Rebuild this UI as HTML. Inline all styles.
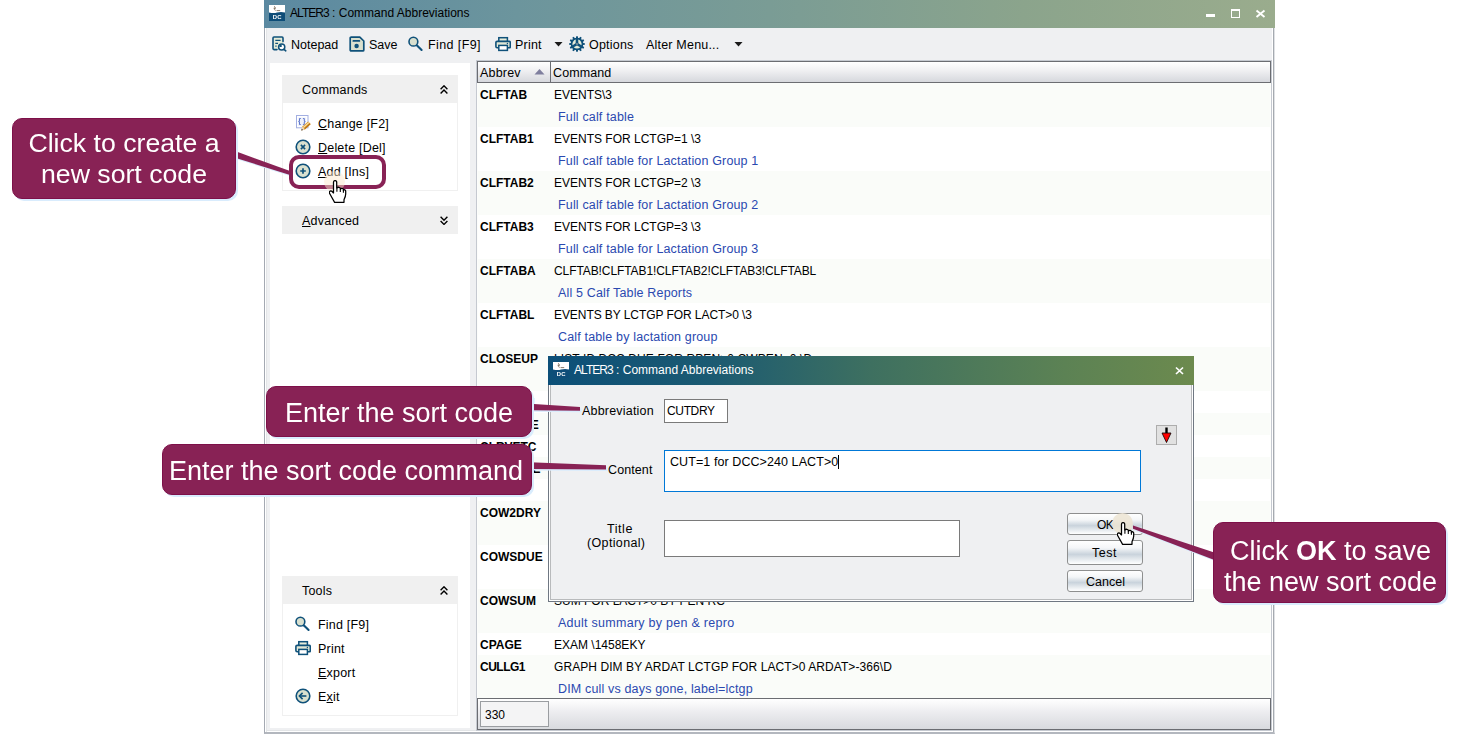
<!DOCTYPE html>
<html><head><meta charset="utf-8"><title>ALTER3 : Command Abbreviations</title>
<style>
*{box-sizing:border-box;margin:0;padding:0}
html,body{width:1463px;height:734px;overflow:hidden;background:#fff}
body{position:relative;font-family:"Liberation Sans",sans-serif;font-size:12px;color:#000}
.a{position:absolute}
.t{position:absolute;white-space:pre;line-height:14px;height:14px;margin-top:1px}
.nt{margin-top:0}
.lc{font-size:12.5px;letter-spacing:.2px}
u{text-decoration:underline;text-underline-offset:1px}
/* main window */
#win{left:264px;top:0;width:1011px;height:734px;background:#eff0f2;border-left:1px solid #a4a9b2;border-right:1px solid #dfe1e4;border-bottom:2px solid #b3b7be;box-shadow:inset 1px 0 0 #fff,inset 2px 0 0 #e3e5e7,inset -1px 0 0 #a5aab0,inset -2px 0 0 #fff,inset 0 -1px 0 #fff,inset 0 -2px 0 #e3e5e7}
#tbar{left:264px;top:0;width:1011px;height:28px;background:linear-gradient(90deg,#5b89a1 0%,#6c959d 25%,#7a9c95 50%,#8ba48c 75%,#9aac8d 100%)}
#lpanel{left:270px;top:63px;width:200px;height:665px;background:#fff}
.ph{background:#f0f0f0;left:282px;width:176px;height:28px}
.pb{left:282px;width:176px;background:#fff;border:1px solid #f0f0f0;border-top:none}
/* list */
#list{left:476px;top:60px;width:796px;height:671px;background:#fcfdfb;border:1px solid #c5c9d0}
#lhead{left:477px;top:61px;width:794px;height:22px;border:1px solid #6b6d72;background:linear-gradient(#ffffff 0%,#f1f1f3 40%,#d6d8dd 100%)}
#lfoot{left:477px;top:698px;width:794px;height:32px;border:1px solid #6b6d72;background:linear-gradient(#ffffff 0%,#ececef 45%,#d8dade 100%)}
.st{left:478px;width:792px;background:#fafcf9}
.sw{left:478px;width:792px;background:#ffffff}
.ab{left:480px;font-weight:bold}
.cm{left:554px}
.ds{left:558px;color:#2a49b0;font-size:12.5px;letter-spacing:.16px}
/* dialog */
#dlg{left:548px;top:356px;width:646px;height:246px;background:#eff0f2;border:1px solid #6f7782;border-top:none;box-shadow:inset 1px 0 0 #fff,inset -1px 0 0 #fff,inset 0 -1px 0 #fff,inset 2px 0 0 #b8babc,inset -2px 0 0 #b8babc,inset 0 -2px 0 #b8babc}
#dtb{left:548px;top:356px;width:646px;height:29px;background:linear-gradient(90deg,#0c4f78 0%,#1b5a72 25%,#3e7060 50%,#5c8254 80%,#6c8a4e 100%)}
.inp{background:#fff;border:1px solid #7a7a7a}
.btn{left:1067px;width:76px;border:1px solid #8e8f8f;border-radius:3px;background:linear-gradient(#ffffff 0%,#f4f6f8 30%,#c9d3dc 58%,#dfe5ea 75%,#ffffff 100%);text-align:center}
/* callouts */
.co{background:#882255;border:1px solid #7d1049;border-radius:10px;color:#fff;text-align:center;font-size:26.67px;line-height:31px;box-shadow:2px 2px 0 #d9ecfd;white-space:pre}
</style></head><body>

<!-- MAIN WINDOW -->
<div class="a" id="win"></div>
<div class="a" id="tbar"></div>
<div class="t nt" style="left:290px;top:6px;font-size:12px;letter-spacing:0"><span style="letter-spacing:-.95px">ALTER3</span> : Command Abbreviations</div>

<!-- left panel -->
<div class="a" id="lpanel"></div>
<div class="a ph" style="top:75px"></div>
<div class="a pb" style="top:103px;height:88px"></div>
<div class="t lc" style="left:302px;top:82px">Commands</div>
<div class="t lc" style="left:318px;top:116px"><u>C</u>hange [F2]</div>
<div class="t lc" style="left:318px;top:140px"><u>D</u>elete [Del]</div>
<div class="t lc" style="left:318px;top:164px"><u>A</u>dd [Ins]</div>
<div class="a ph" style="top:206px"></div>
<div class="t lc" style="left:302px;top:213px"><u>A</u>dvanced</div>
<div class="a ph" style="top:576px"></div>
<div class="a pb" style="top:604px;height:112px"></div>
<div class="t lc" style="left:302px;top:583px">Tools</div>
<div class="t lc" style="left:318px;top:617px">Find [F9]</div>
<div class="t lc" style="left:318px;top:641px">Print</div>
<div class="t lc" style="left:318px;top:665px"><u>E</u>xport</div>
<div class="t lc" style="left:318px;top:689px">E<u>x</u>it</div>

<!-- list -->
<div class="a" id="list"></div>

<!-- list rows -->
<div class="a st" style="top:83px;height:44px"></div>
<div class="t ab" style="top:87px">CLFTAB</div><div class="t cm" style="top:87px">EVENTS\3</div>
<div class="t ds" style="top:109px">Full calf table</div>
<div class="a sw" style="top:127px;height:44px"></div>
<div class="t ab" style="top:131px">CLFTAB1</div><div class="t cm" style="top:131px">EVENTS FOR LCTGP=1 \3</div>
<div class="t ds" style="top:153px">Full calf table for Lactation Group 1</div>
<div class="a st" style="top:171px;height:44px"></div>
<div class="t ab" style="top:175px">CLFTAB2</div><div class="t cm" style="top:175px">EVENTS FOR LCTGP=2 \3</div>
<div class="t ds" style="top:197px">Full calf table for Lactation Group 2</div>
<div class="a sw" style="top:215px;height:44px"></div>
<div class="t ab" style="top:219px">CLFTAB3</div><div class="t cm" style="top:219px">EVENTS FOR LCTGP=3 \3</div>
<div class="t ds" style="top:241px">Full calf table for Lactation Group 3</div>
<div class="a st" style="top:259px;height:44px"></div>
<div class="t ab" style="top:263px">CLFTABA</div><div class="t cm" style="top:263px;letter-spacing:-.09px">CLFTAB!CLFTAB1!CLFTAB2!CLFTAB3!CLFTABL</div>
<div class="t ds" style="top:285px">All 5 Calf Table Reports</div>
<div class="a sw" style="top:303px;height:44px"></div>
<div class="t ab" style="top:307px">CLFTABL</div><div class="t cm" style="top:307px;letter-spacing:-.07px">EVENTS BY LCTGP FOR LACT&gt;0 \3</div>
<div class="t ds" style="top:329px">Calf table by lactation group</div>
<div class="a st" style="top:347px;height:44px"></div>
<div class="t ab" style="top:351px">CLOSEUP</div><div class="t cm" style="top:351px;letter-spacing:.1px">LIST ID DCC DUE FOR RPEN&gt;0 CWPEN=0 \D</div>
<div class="t ds" style="top:373px">Close up cows</div>
<div class="a sw" style="top:391px;height:22px"></div>
<div class="t ab" style="top:395px">CLOSEP1</div><div class="t cm" style="top:395px">LIST ID DCC DUE FOR DCC&gt;250 \D</div>
<div class="a st" style="top:413px;height:22px"></div>
<div class="t ab" style="top:417px">CLOSURE</div><div class="t cm" style="top:417px">LIST ID DCC DUE FOR DCC&gt;255 \D</div>
<div class="a sw" style="top:435px;height:22px"></div>
<div class="t ab" style="top:439px">CLRVETC</div><div class="t cm" style="top:439px">ENTER VETC=0 FOR VETC&gt;0</div>
<div class="a st" style="top:457px;height:22px"></div>
<div class="t ab" style="top:461px">COMPARE</div><div class="t cm" style="top:461px">GRAPH MILK BY DIM LCTGP</div>
<div class="a sw" style="top:479px;height:22px"></div>
<div class="t ab" style="top:483px">COW</div><div class="t cm" style="top:483px">LIST ID PEN LACT</div>
<div class="a st" style="top:501px;height:44px"></div>
<div class="t ab" style="top:505px">COW2DRY</div><div class="t cm" style="top:505px">LIST ID PEN DCC DUE FOR DCC&gt;210 LACT&gt;0</div>
<div class="t ds" style="top:527px">Cows to dry off</div>
<div class="a sw" style="top:545px;height:44px"></div>
<div class="t ab" style="top:549px">COWSDUE</div><div class="t cm" style="top:549px">LIST ID PEN DUE FOR RC=5 BY DUE</div>
<div class="t ds" style="top:571px">Cows due to calve</div>
<div class="a st" style="top:589px;height:44px"></div>
<div class="t ab" style="top:593px">COWSUM</div><div class="t cm" style="top:593px">SUM FOR LACT&gt;0 BY PEN RC</div>
<div class="t ds" style="top:615px;letter-spacing:.27px">Adult summary by pen &amp; repro</div>
<div class="a sw" style="top:633px;height:22px"></div>
<div class="t ab" style="top:637px">CPAGE</div><div class="t cm" style="top:637px">EXAM \1458EKY</div>
<div class="a st" style="top:655px;height:44px"></div>
<div class="t ab" style="top:659px;letter-spacing:-.5px">CULLG1</div><div class="t cm" style="top:659px;letter-spacing:.075px">GRAPH DIM BY ARDAT LCTGP FOR LACT&gt;0 ARDAT&gt;-366\D</div>
<div class="t ds" style="top:681px">DIM cull vs days gone, label=lctgp</div>
<div class="a" id="lhead"></div>
<div class="a" id="lfoot"></div>
<div class="a" style="left:550px;top:62px;width:1px;height:20px;background:#6b6d72"></div>
<div class="t lc" style="left:480px;top:65px">Abbrev</div>
<div class="t lc" style="left:553px;top:65px;letter-spacing:.1px">Command</div>
<svg class="a" style="left:534px;top:68px" width="11" height="7" viewBox="0 0 11 7"><path d="M0.5 6.5 L5.5 1 L10.5 6.5 Z" fill="#7f7f9e"/></svg>
<div class="a inp" style="left:480px;top:701px;width:69px;height:26px;border-color:#9a9da1;background:#f4f4f5"></div>
<div class="t" style="left:485px;top:707px">330</div>

<!-- toolbar -->
<div class="t lc" style="left:291px;top:37px;letter-spacing:0">Notepad</div>
<div class="t lc" style="left:369px;top:37px;letter-spacing:0">Save</div>
<div class="t lc" style="left:428px;top:37px;letter-spacing:.4px">Find [F9]</div>
<div class="t lc" style="left:515px;top:37px">Print</div>
<div class="t lc" style="left:589px;top:37px">Options</div>
<div class="t lc" style="left:646px;top:37px">Alter Menu...</div>
<svg class="a" style="left:554px;top:42px" width="9" height="5" viewBox="0 0 9 5"><path d="M0.5 0 L8.5 0 L4.5 4.5 Z" fill="#1a1a1a"/></svg>
<svg class="a" style="left:734px;top:42px" width="9" height="5" viewBox="0 0 9 5"><path d="M0.5 0 L8.5 0 L4.5 4.5 Z" fill="#1a1a1a"/></svg>

<!-- DIALOG -->
<div class="a" id="dlg"></div>
<div class="a" id="dtb"></div>
<div class="t nt" style="left:574px;top:363px;color:#fff;letter-spacing:0"><span style="letter-spacing:-.95px">ALTER3</span> : Command Abbreviations</div>
<div class="t lc" style="left:582px;top:403px">Abbreviation</div>
<div class="a inp" style="left:664px;top:399px;width:64px;height:24px"></div>
<div class="t" style="left:667px;top:403px;letter-spacing:-.35px">CUTDRY</div>
<div class="t lc" style="left:608px;top:462px;letter-spacing:.1px">Content</div>
<div class="a inp" style="left:664px;top:450px;width:477px;height:42px;border-color:#0078d7"></div>
<div class="t lc" style="left:670px;top:454px;letter-spacing:.08px">CUT=1 for DCC&gt;240 LACT&gt;0</div>
<div class="a" style="left:838px;top:455px;width:1px;height:14px;background:#000"></div>
<div class="t lc" style="left:607px;top:521px;letter-spacing:.55px">Title</div>
<div class="t lc" style="left:587px;top:535px;letter-spacing:.35px">(Optional)</div>
<div class="a inp" style="left:664px;top:520px;width:296px;height:37px"></div>
<div class="a" style="left:1156px;top:425px;width:21px;height:20px;background:#e1e1e1;border:1px solid #adadad"></div>
<svg class="a" style="left:1160px;top:427px" width="13" height="16" viewBox="0 0 13 16"><path d="M6.5 0.5 V8" stroke="#000" stroke-width="2.4"/><path d="M2 6 H11 L6.5 15.5 Z" fill="#f00" stroke="#000" stroke-width="0.8"/></svg>
<div class="a btn" style="top:513px;height:22px"></div>
<div class="a btn" style="top:540px;height:25px"></div>
<div class="a btn" style="top:570px;height:22px"></div>
<div class="t" style="left:1097px;top:517px;font-size:12px;letter-spacing:-.7px">OK</div>
<div class="t lc" style="left:1092px;top:545px;letter-spacing:.55px">Test</div>
<div class="t lc" style="left:1086px;top:574px;letter-spacing:0">Cancel</div>

<!-- ICONS -->
<svg class="a" style="left:269px;top:5px;will-change:transform" width="16" height="16" viewBox="0 0 16 16" ><rect x="0" y="0" width="16" height="16" fill="#0e4d78"/><path d="M0 0 H16 V7.6 C13 6.6 10.5 6.8 8 7.6 C5.5 8.4 3 8.2 0 7.4 Z" fill="#fff"/><path d="M5 1.5 l1 .5 l.3 1.2 l-.8 1 l.9 1.4 M4.6 3.3 l1.6 .2 M7.6 5.6 h3.6" stroke="#6b5a48" stroke-width=".8" fill="none"/><text x="8.2" y="13.9" font-family="Liberation Sans,sans-serif" font-weight="bold" font-size="5.9" fill="#fff" text-anchor="middle" letter-spacing=".2">DC</text></svg>
<svg class="a" style="left:553px;top:362px;will-change:transform" width="16" height="16" viewBox="0 0 16 16" ><rect x="0" y="0" width="16" height="16" fill="#0e4d78"/><path d="M0 0 H16 V7.6 C13 6.6 10.5 6.8 8 7.6 C5.5 8.4 3 8.2 0 7.4 Z" fill="#fff"/><path d="M5 1.5 l1 .5 l.3 1.2 l-.8 1 l.9 1.4 M4.6 3.3 l1.6 .2 M7.6 5.6 h3.6" stroke="#6b5a48" stroke-width=".8" fill="none"/><text x="8.2" y="13.9" font-family="Liberation Sans,sans-serif" font-weight="bold" font-size="5.9" fill="#fff" text-anchor="middle" letter-spacing=".2">DC</text></svg>
<svg class="a" style="left:271px;top:35px" width="16" height="17" viewBox="0 0 16 17" ><path d="M2 2.8 Q2 2 2.8 2 H11.2 Q12 2 12 2.8 V14.5 H2 Z" fill="#e6ecd9"/><path d="M12 6.6 V3 Q12 2 11 2 H3 Q2 2 2 3 V13.6 Q2 14.6 3 14.6 H6" fill="none" stroke="#0f517a" stroke-width="1.6" stroke-linecap="round"/><path d="M4.3 5.4 H9.6 M4.3 8.3 H7 M4.3 11.2 H5.6" stroke="#0f517a" stroke-width="1.3"/><circle cx="10.7" cy="12" r="3.1" fill="#fff" stroke="#0f517a" stroke-width="1.5"/><path d="M10.7 12 V9.6 A2.4 2.4 0 0 0 8.3 12 Z" fill="#0f517a"/><path d="M13 14.3 L14.8 15.8" stroke="#0f517a" stroke-width="1.6" stroke-linecap="round"/></svg>
<svg class="a" style="left:349px;top:36px" width="16" height="16" viewBox="0 0 16 16" ><path d="M2.2 1.1 H10.8 L14.8 5 V13.9 Q14.8 14.9 13.8 14.9 H2.2 Q1.2 14.9 1.2 13.9 V2.1 Q1.2 1.1 2.2 1.1 Z" fill="#d9e0cf" stroke="#0f517a" stroke-width="1.7" stroke-linejoin="round"/><path d="M4.3 4.9 H10.4" stroke="#0f517a" stroke-width="1.7" stroke-linecap="round"/><circle cx="7.6" cy="10" r="2.2" fill="#0f517a"/></svg>
<svg class="a" style="left:408px;top:36px" width="16" height="16" viewBox="0 0 16 16" ><circle cx="5.4" cy="5.65" r="4.4" fill="#d9e0cf" stroke="#0f517a" stroke-width="1.6"/><path d="M9 9.4 L13.6 14" stroke="#0f517a" stroke-width="2.1" stroke-linecap="round"/></svg>
<svg class="a" style="left:495px;top:36px" width="16" height="16" viewBox="0 0 16 16" ><rect x="3.8" y="1.7" width="8.6" height="4" fill="#e6ecd9" stroke="#0f517a" stroke-width="1.5"/><rect x="0.9" y="5.4" width="14.4" height="6.4" rx="1.2" fill="#e2e8d6" stroke="#0f517a" stroke-width="1.6"/><rect x="3.8" y="9.4" width="8.6" height="5" fill="#fff" stroke="#0f517a" stroke-width="1.5"/><circle cx="12.4" cy="7.4" r=".7" fill="#0f517a"/></svg>
<svg class="a" style="left:569px;top:36px" width="16" height="16" viewBox="0 0 16 16" ><polygon points="6.90,1.90 7.17,0.14 8.83,0.14 9.10,1.90 10.10,2.17 11.21,0.78 12.64,1.61 12.00,3.26 12.74,4.00 14.39,3.36 15.22,4.79 13.83,5.90 14.10,6.90 15.86,7.17 15.86,8.83 14.10,9.10 13.83,10.10 15.22,11.21 14.39,12.64 12.74,12.00 12.00,12.74 12.64,14.39 11.21,15.22 10.10,13.83 9.10,14.10 8.83,15.86 7.17,15.86 6.90,14.10 5.90,13.83 4.79,15.22 3.36,14.39 4.00,12.74 3.26,12.00 1.61,12.64 0.78,11.21 2.17,10.10 1.90,9.10 0.14,8.83 0.14,7.17 1.90,6.90 2.17,5.90 0.78,4.79 1.61,3.36 3.26,4.00 4.00,3.26 3.36,1.61 4.79,0.78 5.90,2.17" fill="#0f517a"/><circle cx="8" cy="8" r="6.2" fill="#0f517a"/><path d="M8.00 9.60 L11.24 11.27 A4.6 4.6 0 0 1 4.76 11.27 Z" fill="#e6ecd9"/><path d="M6.61 7.20 L3.55 9.17 A4.6 4.6 0 0 1 6.79 3.56 Z" fill="#e6ecd9"/><path d="M9.39 7.20 L9.21 3.56 A4.6 4.6 0 0 1 12.45 9.17 Z" fill="#e6ecd9"/><circle cx="8" cy="8" r=".9" fill="#8a98a0"/></svg>
<svg class="a" style="left:295px;top:114px;will-change:transform" width="17" height="18" viewBox="0 0 17 18" ><rect x="1.5" y="1.5" width="11.5" height="12.3" fill="#fff" stroke="#a3afe2" stroke-width="1"/><rect x="3" y="3.5" width="8" height="8.5" fill="#eef1fb"/><text y="9.4" font-family="Liberation Sans,sans-serif" font-weight="bold" font-size="7.8" fill="#5f78cc"><tspan x="3">{</tspan><tspan x="7.8">}</tspan></text><path d="M6.3 16.4 L7.4 12.6 L13.2 7.4 L15.8 10.2 L10 15.4 Z" fill="#d38b1f"/><path d="M8.4 13.4 L13.9 8.4" stroke="#f7dfa6" stroke-width="1.3"/><path d="M9.7 14.7 L15.1 9.7" stroke="#b56d12" stroke-width="1"/><path d="M6.3 16.4 L7.4 12.6 L10 15.4 Z" fill="#f2d9b0"/><path d="M6.3 16.4 L6.8 14.7 L8 16 Z" fill="#1b2a55"/></svg>
<svg class="a" style="left:295px;top:139px" width="16" height="16" viewBox="0 0 16 16" ><circle cx="8" cy="8" r="6.8" fill="#d9e0cf" stroke="#0f517a" stroke-width="1.6"/><path d="M5.9 5.9 L10.1 10.1 M10.1 5.9 L5.9 10.1" stroke="#0f517a" stroke-width="1.6"/></svg>
<svg class="a" style="left:295px;top:163px" width="16" height="16" viewBox="0 0 16 16" ><circle cx="8" cy="8" r="6.8" fill="#d9e0cf" stroke="#0f517a" stroke-width="1.6"/><path d="M8 5.2 V10.8 M5.2 8 H10.8" stroke="#0f517a" stroke-width="1.7"/></svg>
<svg class="a" style="left:440px;top:85px" width="8" height="9" viewBox="0 0 8 9" ><path d="M0.6 4.2 L4 0.8 L7.4 4.2 M0.6 8.4 L4 5 L7.4 8.4" fill="none" stroke="#000" stroke-width="1.4"/></svg>
<svg class="a" style="left:440px;top:216px" width="8" height="9" viewBox="0 0 8 9" ><path d="M0.6 0.8 L4 4.2 L7.4 0.8 M0.6 5 L4 8.4 L7.4 5" fill="none" stroke="#000" stroke-width="1.4"/></svg>
<svg class="a" style="left:440px;top:586px" width="8" height="9" viewBox="0 0 8 9" ><path d="M0.6 4.2 L4 0.8 L7.4 4.2 M0.6 8.4 L4 5 L7.4 8.4" fill="none" stroke="#000" stroke-width="1.4"/></svg>
<svg class="a" style="left:295px;top:616px" width="16" height="16" viewBox="0 0 16 16" ><circle cx="5.4" cy="5.65" r="4.4" fill="#d9e0cf" stroke="#0f517a" stroke-width="1.6"/><path d="M9 9.4 L13.6 14" stroke="#0f517a" stroke-width="2.1" stroke-linecap="round"/></svg>
<svg class="a" style="left:295px;top:640px" width="16" height="16" viewBox="0 0 16 16" ><rect x="3.8" y="1.7" width="8.6" height="4" fill="#e6ecd9" stroke="#0f517a" stroke-width="1.5"/><rect x="0.9" y="5.4" width="14.4" height="6.4" rx="1.2" fill="#e2e8d6" stroke="#0f517a" stroke-width="1.6"/><rect x="3.8" y="9.4" width="8.6" height="5" fill="#fff" stroke="#0f517a" stroke-width="1.5"/><circle cx="12.4" cy="7.4" r=".7" fill="#0f517a"/></svg>
<svg class="a" style="left:295px;top:688px" width="16" height="16" viewBox="0 0 16 16" ><circle cx="8" cy="8" r="6.8" fill="#d9e0cf" stroke="#0f517a" stroke-width="1.6"/><path d="M4.6 8 H11.4" stroke="#0f517a" stroke-width="1.6"/><path d="M7.6 4.9 L4.4 8 L7.6 11.1" fill="none" stroke="#0f517a" stroke-width="1.6"/></svg>
<svg class="a" style="left:0;top:0" width="1463" height="734" viewBox="0 0 1463 734"><rect x="1206" y="14" width="9" height="3" fill="#fff"/><rect x="1231.5" y="10" width="8" height="7.5" fill="none" stroke="#fff" stroke-width="1"/><rect x="1231" y="9" width="9" height="2" fill="#fff"/><path d="M1256.5 10.5 L1264.5 17 M1264.5 10.5 L1256.5 17" stroke="#fff" stroke-width="1.9"/><path d="M1176 367.5 L1183 374 M1183 367.5 L1176 374" stroke="#fff" stroke-width="1.7"/></svg>
<!-- CALLOUTS -->
<svg class="a" style="left:0;top:0" width="1463" height="734" viewBox="0 0 1463 734">
 <g fill="#d9ecfd" stroke="none" transform="translate(1.5,1.5)">
  <path d="M235 151 L290 171 L290 175 L235 157.7 Z"/>
  <path d="M530 403.7 L580 407 L580 410.7 L530 410.2 Z"/>
  <path d="M530 462.2 L606 465.3 L606 469.5 L530 469 Z"/>
  <path d="M1133 525.5 L1215 552.8 L1215 560.2 L1133 528.8 Z"/>
 </g>
 <g fill="#882255" stroke="none">
  <path d="M235 151 L290 171 L290 175 L235 157.7 Z"/>
  <path d="M530 403.7 L580 407 L580 410.7 L530 410.2 Z"/>
  <path d="M530 462.2 L606 465.3 L606 469.5 L530 469 Z"/>
  <path d="M1133 525.5 L1215 552.8 L1215 560.2 L1133 528.8 Z"/>
 </g>
 <rect x="291" y="157" width="93" height="30" rx="8" ry="8" fill="none" stroke="#882255" stroke-width="4"/>
</svg>
<div class="a co" style="left:12px;top:118px;width:224px;height:81px;padding-top:9px">Click to create a
new sort code</div>
<div class="a co" style="left:266px;top:386px;width:266px;height:51px;padding-top:11px;font-size:27px">Enter the sort code</div>
<div class="a co" style="left:162px;top:444px;width:370px;height:51px;padding-top:11px;font-size:27px;text-indent:-2px">Enter the sort code command</div>
<div class="a co" style="left:1213px;top:522px;width:233px;height:81px;padding-top:13px;padding-left:2px;font-size:27px">Click <b>OK</b> to save
the new sort code</div>

<!-- CURSORS -->
<div class="a" style="left:324px;top:171px;width:21px;height:21px;border-radius:50%;background:rgba(252,232,205,.5)"></div>
<div class="a" style="left:1112px;top:513px;width:21px;height:21px;border-radius:50%;background:rgba(236,227,210,.84)"></div>
<svg class="a" style="left:329px;top:180px" width="18" height="24" viewBox="0 0 18 23" preserveAspectRatio="none"><path d="M6 0.6 C5.1 0.6 4.5 1.3 4.5 2.1 L4.5 12.4 L3.1 11 C2.4 10.3 1.3 10.3 0.7 11 C0.1 11.7 0.3 12.5 0.8 13.2 L5.6 21.4 L15 21.4 L15 19 C16 17 16.7 15.5 16.7 13.5 L16.7 10.6 C16.7 9.3 15.2 9 14.4 9.8 L14.4 9.1 C14.2 7.8 12.2 7.6 11.4 8.6 L11.4 8 C11.1 6.8 9 6.6 7.7 7.6 L7.7 2.1 C7.7 1.3 7 0.6 6 0.6 Z" fill="#fff" stroke="#000" stroke-width="1.25" stroke-linejoin="round"/><path d="M7.9 7.4 V11.2 M11.3 8.4 V11.6 M14.4 9.6 V12.2" stroke="#000" stroke-width="1.1" fill="none"/></svg>
<svg class="a" style="left:1117px;top:522px" width="18" height="24" viewBox="0 0 18 23" preserveAspectRatio="none"><path d="M6 0.6 C5.1 0.6 4.5 1.3 4.5 2.1 L4.5 12.4 L3.1 11 C2.4 10.3 1.3 10.3 0.7 11 C0.1 11.7 0.3 12.5 0.8 13.2 L5.6 21.4 L15 21.4 L15 19 C16 17 16.7 15.5 16.7 13.5 L16.7 10.6 C16.7 9.3 15.2 9 14.4 9.8 L14.4 9.1 C14.2 7.8 12.2 7.6 11.4 8.6 L11.4 8 C11.1 6.8 9 6.6 7.7 7.6 L7.7 2.1 C7.7 1.3 7 0.6 6 0.6 Z" fill="#fff" stroke="#000" stroke-width="1.25" stroke-linejoin="round"/><path d="M7.9 7.4 V11.2 M11.3 8.4 V11.6 M14.4 9.6 V12.2" stroke="#000" stroke-width="1.1" fill="none"/></svg>
</body></html>
